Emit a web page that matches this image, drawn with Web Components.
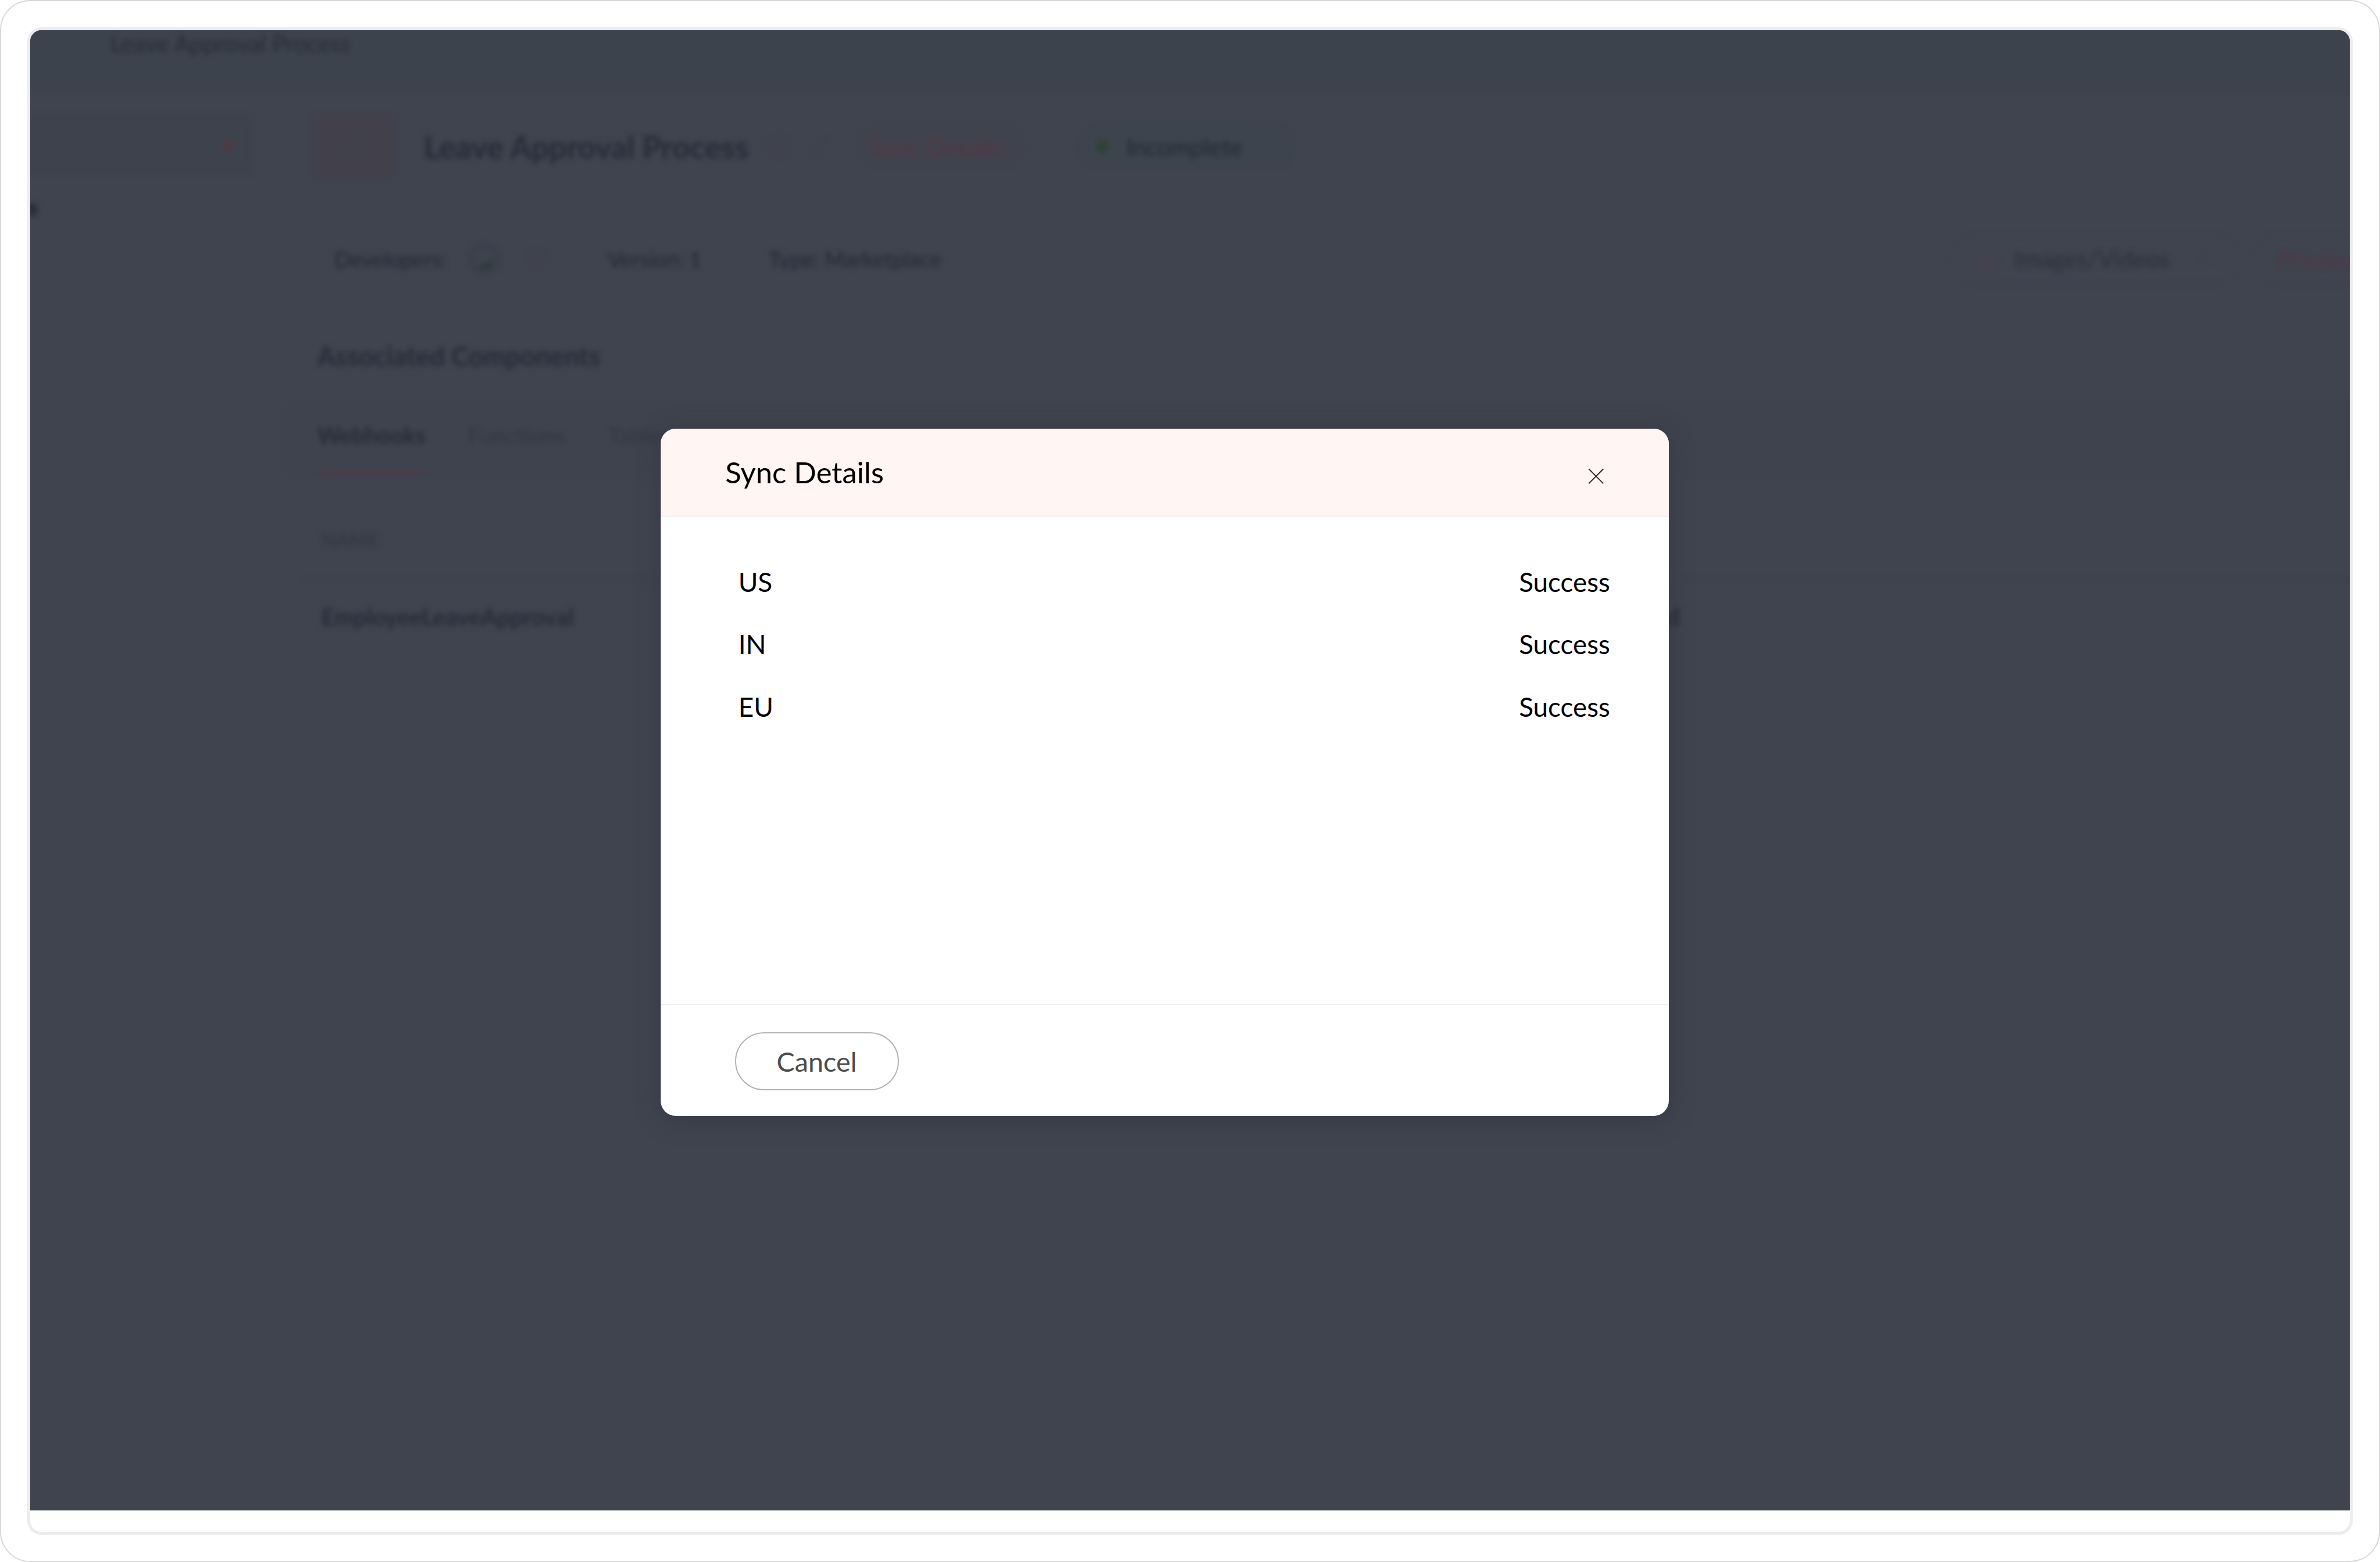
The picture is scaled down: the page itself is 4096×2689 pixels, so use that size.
<!DOCTYPE html>
<html lang="en">
<head>
<meta charset="utf-8">
<title>Sync Details</title>
<style>
    /* 1rem = 10 design pixels */
    html { font-size: 8.6523px; }
    body {
        margin: 0;
        background: #fff;
        font-family: Lato, "Liberation Sans", sans-serif;
        overflow: hidden;
    }
</style>
</head>
<body>
<window-frame>
    <app-page>
        <side-bar slot="side"></side-bar>
        <title-row></title-row>
        <meta-row></meta-row>
        <component-list heading="Associated Components"></component-list>
    </app-page>
    <sync-dialog slot="dialog" heading="Sync Details" action="Cancel">
        <sync-row region="US" status="Success"></sync-row>
        <sync-row region="IN" status="Success"></sync-row>
        <sync-row region="EU" status="Success"></sync-row>
    </sync-dialog>
</window-frame>

<script>
class WindowFrame extends HTMLElement {
    constructor() {
        super();
        this.attachShadow({ mode: 'open' });
        this.shadowRoot.innerHTML = `
            <style>
                :host {
                    display: block;
                    box-sizing: border-box;
                    width: 100vw;
                    height: 100vh;
                    padding: 45px;
                    border: 2px solid #d8d8d8;
                    border-radius: 6rem;
                    background: #fff;
                }
                .frame {
                    position: relative;
                    box-sizing: border-box;
                    height: 100%;
                    border: 5px solid #ececec;
                    border-radius: 2.8rem;
                    background: #fff;
                    overflow: hidden;
                }
                .view {
                    height: 294.5rem;
                    background: #3f444f;
                    border-bottom: 1px solid #cdd0d3;
                    overflow: hidden;
                }
            </style>
            <div class="frame">
                <div class="view"><slot></slot></div>
                <slot name="dialog"></slot>
            </div>
        `;
    }
}

// The page behind the dialog, dimmed and out of focus
class AppPage extends HTMLElement {
    constructor() {
        super();
        this.attachShadow({ mode: 'open' });
        this.shadowRoot.innerHTML = `
            <style>
                :host {
                    display: block;
                    filter: blur(.55rem);
                    color: #262b37;
                    white-space: nowrap;
                }
                .crumb {
                    box-sizing: border-box;
                    height: 13.8rem;
                    margin: -2rem -2rem 0;
                    padding: 2rem 0 0 17.9rem;
                    background: #3d434d;
                    font-size: 4.65rem;
                    line-height: 5.3rem;
                }
                .cols { display: grid; grid-template-columns: 50.9rem 1fr; }
            </style>
            <div class="crumb">Leave Approval Process</div>
            <div class="cols">
                <slot name="side"></slot>
                <main><slot></slot></main>
            </div>
        `;
    }
}

class SideBar extends HTMLElement {
    constructor() {
        super();
        this.attachShadow({ mode: 'open' });
        this.shadowRoot.innerHTML = `
            <style>
                :host { display: block; padding-top: 5rem; }
                .item {
                    display: flex;
                    align-items: center;
                    justify-content: flex-end;
                    box-sizing: border-box;
                    width: 46.2rem;
                    height: 12rem;
                    margin-left: -2rem;
                    padding-right: 3.7rem;
                    border-radius: 1rem;
                    background: #3d424d;
                }
                .dot { width: 2.4rem; height: 2.4rem; border-radius: 50%; background: #4f3a43; }
                .next {
                    width: 2.8rem;
                    height: 2.6rem;
                    margin: 5.6rem 0 0 -1.3rem;
                    border-radius: 1rem;
                    background: #2b303c;
                }
            </style>
            <div class="item"><span class="dot"></span></div>
            <div class="next"></div>
        `;
    }
}

class TitleRow extends HTMLElement {
    constructor() {
        super();
        this.attachShadow({ mode: 'open' });
        this.shadowRoot.innerHTML = `
            <style>
                :host { display: flex; align-items: center; height: 22.6rem; }
                .logo {
                    display: flex;
                    align-items: center;
                    justify-content: center;
                    width: 16.4rem;
                    height: 13rem;
                    margin-left: 5.2rem;
                    border-radius: .8rem;
                    background: #42404b;
                    color: #3f434e;
                    font-size: 6.4rem;
                }
                h1 { margin: 0 0 0 5.8rem; font-size: 6.17rem; font-weight: 700; line-height: 1.2; }
                svg { fill: none; stroke: #453f4a; stroke-width: 4; }
                .info { width: 4.6rem; height: 4.6rem; margin-left: 3.4rem; }
                .edit { width: 3.8rem; height: 3.8rem; margin-left: 4.2rem; }
                .pill {
                    display: flex;
                    align-items: center;
                    box-sizing: border-box;
                    height: 8.6rem;
                    border-radius: 4.3rem;
                    font-size: 4.75rem;
                }
                .sync {
                    width: 34.4rem;
                    margin-left: 5rem;
                    padding-left: 2.9rem;
                    background: #40434e;
                    color: #533744;
                    font-size: 4.95rem;
                }
                .state {
                    width: 42.4rem;
                    margin-left: 10.4rem;
                    padding-left: 3.1rem;
                    background: #3d444d;
                    border: .25rem solid #3a434a;
                    color: #222831;
                }
                .dot { width: 2.5rem; height: 2.5rem; border-radius: 50%; background: #2f4136; }
                .label { margin: 0 3.2rem 0 3.5rem; }
                .ring {
                    box-sizing: border-box;
                    width: 4.6rem;
                    height: 4.6rem;
                    border: .3rem solid #3a424b;
                    border-radius: 50%;
                }
            </style>
            <div class="logo">LA</div>
            <h1>Leave Approval Process</h1>
            <svg class="info" viewBox="0 0 46 46"><circle cx="23" cy="23" r="20"/><path d="M23 20v12M23 13v3"/></svg>
            <svg class="edit" viewBox="0 0 38 38"><path d="M4 34l3-10L27 4l7 7-20 20z"/></svg>
            <div class="pill sync">Sync Details</div>
            <div class="pill state"><span class="dot"></span><span class="label">Incomplete</span><span class="ring"></span></div>
        `;
    }
}

class MetaRow extends HTMLElement {
    constructor() {
        super();
        this.attachShadow({ mode: 'open' });
        this.shadowRoot.innerHTML = `
            <style>
                :host {
                    display: grid;
                    grid-template-columns: 26.6rem 11.8rem 16rem 32rem 234.7rem 60.5rem 30rem;
                    align-items: center;
                    height: 22.2rem;
                    padding-left: 9.6rem;
                    font-size: 4.27rem;
                    color: #222733;
                }
                .photo { width: 6.4rem; height: 6.4rem; }
                .plus { width: 3.8rem; height: 3.8rem; fill: none; stroke: #453f4a; stroke-width: 4; }
                .pill {
                    display: flex;
                    align-items: center;
                    box-sizing: border-box;
                    height: 10.3rem;
                    border: .25rem solid #41424d;
                    border-radius: 5.2rem;
                    font-size: 4.72rem;
                    color: #2a303b;
                }
                .media { width: 57.9rem; padding: 0 5.1rem 0 5.3rem; }
                .media span { margin: 0 auto 0 3.7rem; }
                .media svg { width: 3.9rem; height: 4rem; fill: none; stroke: #48404c; stroke-width: 5; }
                .media svg.more { width: 2.2rem; height: 2.8rem; }
                .preview { padding-left: 4.8rem; color: #533744; }
            </style>
            <span>Developers:</span>
            <svg class="photo" viewBox="0 0 64 64">
                <circle cx="32" cy="32" r="28" fill="#3d434e" stroke="#383f4a" stroke-width="6"/>
                <path d="M14 46q16 2 34-14v12q-12 18-34 2z" fill="#2c3a3a"/>
            </svg>
            <svg class="plus" viewBox="0 0 38 38"><circle cx="19" cy="19" r="16"/><path d="M19 12v14M12 19h14"/></svg>
            <span>Version: 1</span>
            <span>Type: Marketplace</span>
            <div class="pill media">
                <svg viewBox="0 0 39 40"><rect x="4" y="4" width="31" height="32" rx="4"/><path d="M4 29l10-9 8 7 6-5 7 6"/></svg>
                <span>Images/Videos</span>
                <svg class="more" viewBox="0 0 22 28"><path d="M5 4l11 10L5 24"/></svg>
            </div>
            <div class="pill preview">Preview</div>
        `;
    }
}

class ComponentList extends HTMLElement {
    constructor() {
        super();
        this.attachShadow({ mode: 'open' });
        const heading = this.getAttribute('heading');
        this.shadowRoot.innerHTML = `
            <style>
                :host { display: block; }
                h2 { margin: 0; padding-left: 6.2rem; font-size: 5.23rem; font-weight: 700; line-height: 16.5rem; height: 16.9rem; }
                nav {
                    display: flex;
                    gap: 8.4rem;
                    height: 14.9rem;
                    padding-left: 6.2rem;
                    background: #3e434e;
                    font-size: 4.52rem;
                    line-height: 14.1rem;
                    color: #313641;
                }
                .on { height: 14.1rem; border-bottom: .9rem solid #4c3c46; font-weight: 700; color: #262b37; }
                .name, .row { margin-left: 3.6rem; padding-left: 3.4rem; }
                .name {
                    height: 15.2rem;
                    padding-top: 5.4rem;
                    border-bottom: .3rem solid #3b404b;
                    font-size: 3.9rem;
                    line-height: 15.2rem;
                    color: #303540;
                }
                .row {
                    display: grid;
                    grid-template-columns: 267.6rem auto;
                    font-size: 4.6rem;
                    font-weight: 700;
                    line-height: 15rem;
                }
                .end { justify-self: start; }
            </style>
            <h2>${heading}</h2>
            <nav><span class="on">Webhooks</span><span>Functions</span><span>Tables</span></nav>
            <div class="name">NAME</div>
            <div class="row"><span>EmployeeLeaveApproval</span><span class="end">d</span></div>
        `;
    }
}

class SyncDialog extends HTMLElement {
    constructor() {
        super();
        this.attachShadow({ mode: 'open' });
        const heading = this.getAttribute('heading');
        const action = this.getAttribute('action');
        this.shadowRoot.innerHTML = `
            <style>
                :host {
                    position: absolute;
                    left: 125.45rem;
                    top: 79.25rem;
                    display: flex;
                    flex-direction: column;
                    width: 200.5rem;
                    height: 136.8rem;
                    border-radius: 3rem;
                    background: #fff;
                    box-shadow: 0 .8rem 5rem rgba(48, 46, 54, .45);
                    color: #000;
                    overflow: hidden;
                }
                header {
                    display: flex;
                    align-items: center;
                    justify-content: space-between;
                    box-sizing: border-box;
                    height: 17.65rem;
                    padding: 0 12.9rem .1rem 12.8rem;
                    border-bottom: 2px solid #f3f3f2;
                    background: #fff5f3;
                    font-size: 5.88rem;
                }
                header svg { width: 3.2rem; height: 3.2rem; margin-top: 1.7rem; }
                .rows { flex: 1; padding: 6.6rem 11.7rem 0 15.4rem; }
                footer {
                    box-sizing: border-box;
                    height: 22.3rem;
                    padding: 5.4rem 0 0 14.7rem;
                    border-top: 2px solid #f0f0f0;
                }
                button {
                    box-sizing: border-box;
                    width: 32.6rem;
                    height: 11.5rem;
                    padding: 0;
                    border: 2px solid #b2b2b2;
                    border-radius: 5.75rem;
                    background: #fff;
                    color: #4d4d4d;
                    font: 5.4rem Lato, "Liberation Sans", sans-serif;
                }
            </style>
            <header>
                <span>${heading}</span>
                <svg viewBox="0 0 32 32" fill="none" stroke="#2b2b2b" stroke-width="2.3"><path d="M1.5 1.5l29 29M30.5 1.5l-29 29"/></svg>
            </header>
            <div class="rows"><slot></slot></div>
            <footer><button>${action}</button></footer>
        `;
    }
}

class SyncRow extends HTMLElement {
    constructor() {
        super();
        this.attachShadow({ mode: 'open' });
        const region = this.getAttribute('region');
        const status = this.getAttribute('status');
        this.shadowRoot.innerHTML = `
            <style>
                :host {
                    display: flex;
                    align-items: center;
                    justify-content: space-between;
                    height: 12.44rem;
                    font-size: 5.3rem;
                }
            </style>
            <span>${region}</span>
            <span>${status}</span>
        `;
    }
}

customElements.define('window-frame', WindowFrame);
customElements.define('app-page', AppPage);
customElements.define('side-bar', SideBar);
customElements.define('title-row', TitleRow);
customElements.define('meta-row', MetaRow);
customElements.define('component-list', ComponentList);
customElements.define('sync-dialog', SyncDialog);
customElements.define('sync-row', SyncRow);
</script>
</body>
</html>
